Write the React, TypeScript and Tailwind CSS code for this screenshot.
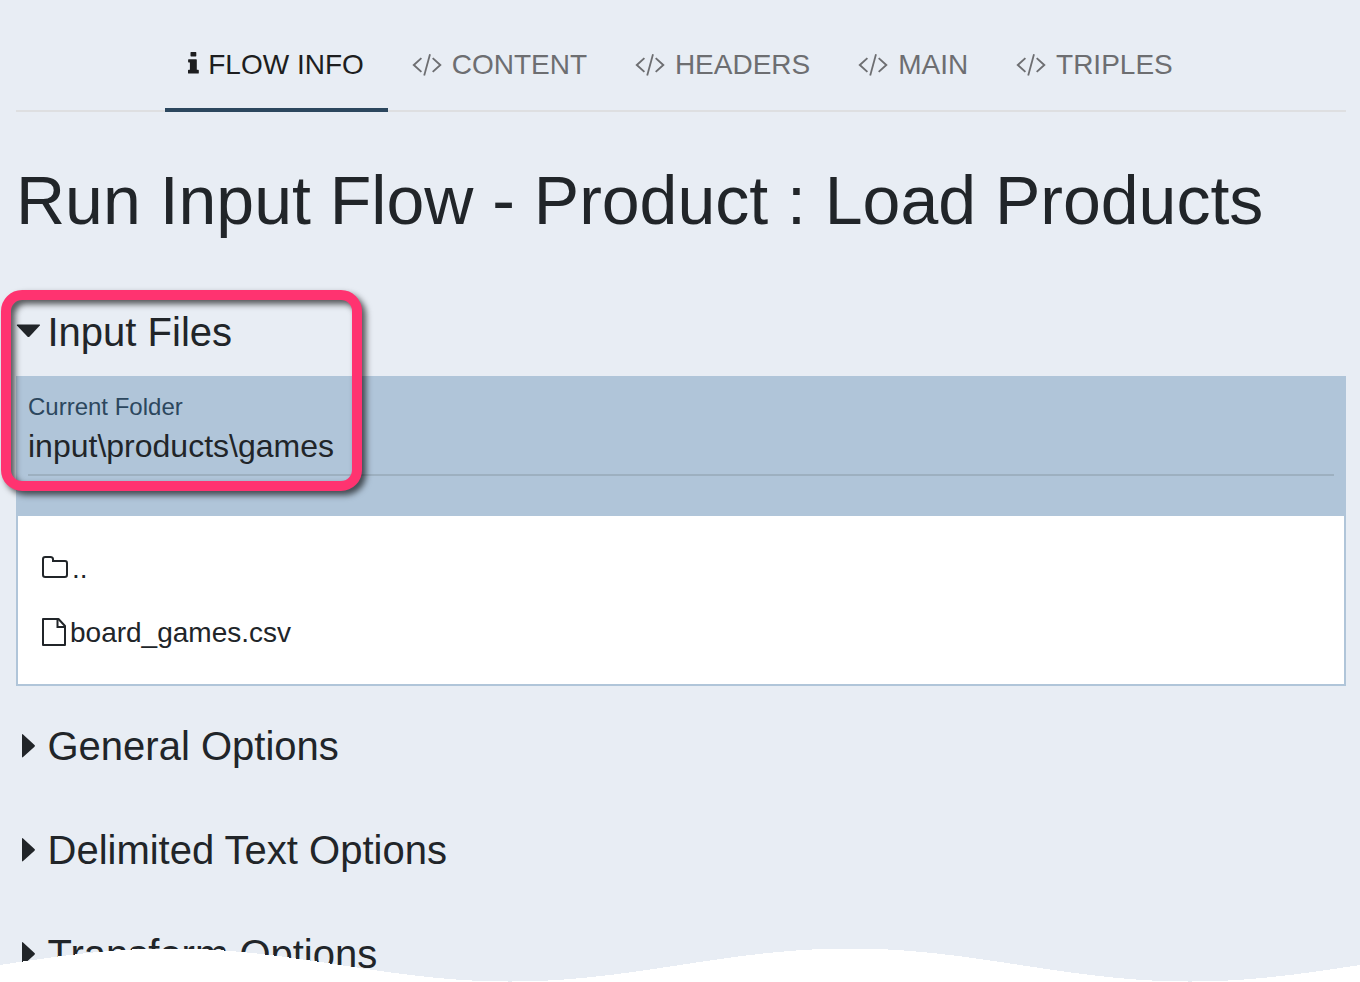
import React from 'react';

const InfoIcon = () => (
  <svg className="h-7 w-[12px] shrink-0" viewBox="0 0 12 28" fill="currentColor">
    <path d="M2.500 2.600q0-.6.6-.6h4.600q.6 0 .6.6v3.200q0 .6-.6.6H3.100q-.6 0-.6-.6zM.6 9.300q-.5 0-.5.6v1.900q0 .7.6.7h1.200v7.300H.7q-.7 0-.7.7v2.400q0 .7.7.7h9.400q.7 0 .7-.7v-2.400q0-.7-.7-.7H8.800V9.900q0-.6-.6-.6z" />
  </svg>
);

const CodeIcon = () => (
  <svg
    className="h-7 w-[32px] shrink-0"
    viewBox="0 0 32 28"
    fill="none"
    stroke="currentColor"
    strokeWidth="1.9"
  >
    <path d="M9.400 8.100 1.800 15l7.600 6.900M20.700 8.100l7.600 6.900-7.600 6.900" />
    <path d="M18 4.300 12.200 25.400" strokeWidth="1.8" />
  </svg>
);

const CaretDown = () => (
  <svg className="h-7 w-[31.500px] shrink-0" viewBox="0 0 31.5 28" fill="currentColor">
    <path d="M1.600 6.500h21.800q1 0 .4 1L13.400 18.700q-.9.800-1.800 0L.9 7.500Q.4 6.500 1.600 6.500z" />
  </svg>
);

const CaretRight = () => (
  <svg className="h-7 w-[31.500px] shrink-0" viewBox="0 0 31.5 28" fill="currentColor">
    <path d="M6 3q0-1.400 1.100-.6l11.400 10.600q1 .8 0 1.700L7.100 25.100q-1.100.9-1.100-.4z" />
  </svg>
);

const FolderIcon = () => (
  <svg
    className="h-7 w-[30px] shrink-0"
    viewBox="0 0 30 28"
    fill="none"
    stroke="currentColor"
    strokeWidth="2"
  >
    <path d="M1 5.200Q1 3 3.200 3h5.300Q10.700 3 11 5v2h12Q25 7 25 9.200v11.600Q25 23 22.800 23H3.200Q1 23 1 20.800z" />
  </svg>
);

const FileIcon = () => (
  <svg
    className="h-7 w-[28px] shrink-0"
    viewBox="0 0 28 28"
    fill="none"
    stroke="currentColor"
    strokeWidth="2"
  >
    <path d="M1 1h15.500L23 8v19H1z" strokeLinejoin="round" />
    <path d="M15.500 1v8H23" />
  </svg>
);

const tabs = ['CONTENT', 'HEADERS', 'MAIN', 'TRIPLES'];
const closedSections = ['General Options', 'Delimited Text Options', 'Transform Options'];

const waveEdge = Array.from({ length: 341 }, (_, i) => {
  const x = i * 4;
  const y = 17 - 16.500 * Math.sin((2 * Math.PI * x) / 680);
  return `L${x} ${y.toFixed(2)}`;
}).join('');

export default function App() {
  return (
    <div className="relative h-[982px] w-[1360px] overflow-hidden bg-[#e8edf4] pl-4 pr-[14px] font-['Liberation_Sans',Arial,sans-serif] text-[#212529]">
      <nav className="flex h-28 justify-center text-[28px] leading-7 shadow-[inset_0_-2px_0_#dedfe1]">
        <div className="flex h-28 gap-[8px] border-b-4 border-[#2c475e] pl-[23px] pr-6 pt-[50px] text-[#1d1e20]">
          <InfoIcon />
          <span className="pt-px">FLOW INFO</span>
        </div>
        {tabs.map((tab) => (
          <div key={tab} className="flex gap-[7.900px] px-6 pt-[50px] text-[#6d6e71]">
            <CodeIcon />
            <span className="pt-px">{tab}</span>
          </div>
        ))}
      </nav>

      <h1 className="mt-12 h-20 whitespace-nowrap text-[68px] leading-[80px]">
        Run Input Flow - Product : Load Products
      </h1>

      <h2 className="mt-[68px] flex h-12 items-center text-[40px] leading-[48px]">
        <CaretDown />
        Input Files
      </h2>

      <section className="mt-5 h-[310px] border-2 border-[#b0c5d9] bg-white">
        <div className="h-[138px] bg-[#b0c5d9] px-[10px] pt-[14px]">
          <div className="h-[84px] border-b-2 border-[#9db0c0]">
            <div className="text-2xl leading-[30px] text-[#2c475e]">Current Folder</div>
            <div className="pt-1 text-[32px] leading-10">input\products\games</div>
          </div>
        </div>
        <div className="flex flex-col gap-9 pl-6 pt-[38px] text-[28px] leading-7">
          <div className="flex h-7">
            <FolderIcon />
            <span className="pt-px">..</span>
          </div>
          <div className="flex h-7">
            <FileIcon />
            <span className="pt-px">board_games.csv</span>
          </div>
        </div>
      </section>

      <div className="mt-9 flex flex-col gap-14">
        {closedSections.map((title) => (
          <h2 key={title} className="flex h-12 items-center text-[40px] leading-[48px]">
            <CaretRight />
            {title}
          </h2>
        ))}
      </div>

      <div className="absolute left-px top-[290px] h-[201px] w-[361px] rounded-[21px] border-10 border-[#ff3370] drop-shadow-[4px_4px_3px_rgba(0,0,0,0.65)]" />

      <svg
        className="absolute bottom-0 left-0 h-[34px] w-[1360px]"
        viewBox="0 0 1360 34"
        shapeRendering="crispEdges"
      >
        <path d={`M0 34${waveEdge}L1360 34z`} fill="#fff" />
      </svg>
    </div>
  );
}
